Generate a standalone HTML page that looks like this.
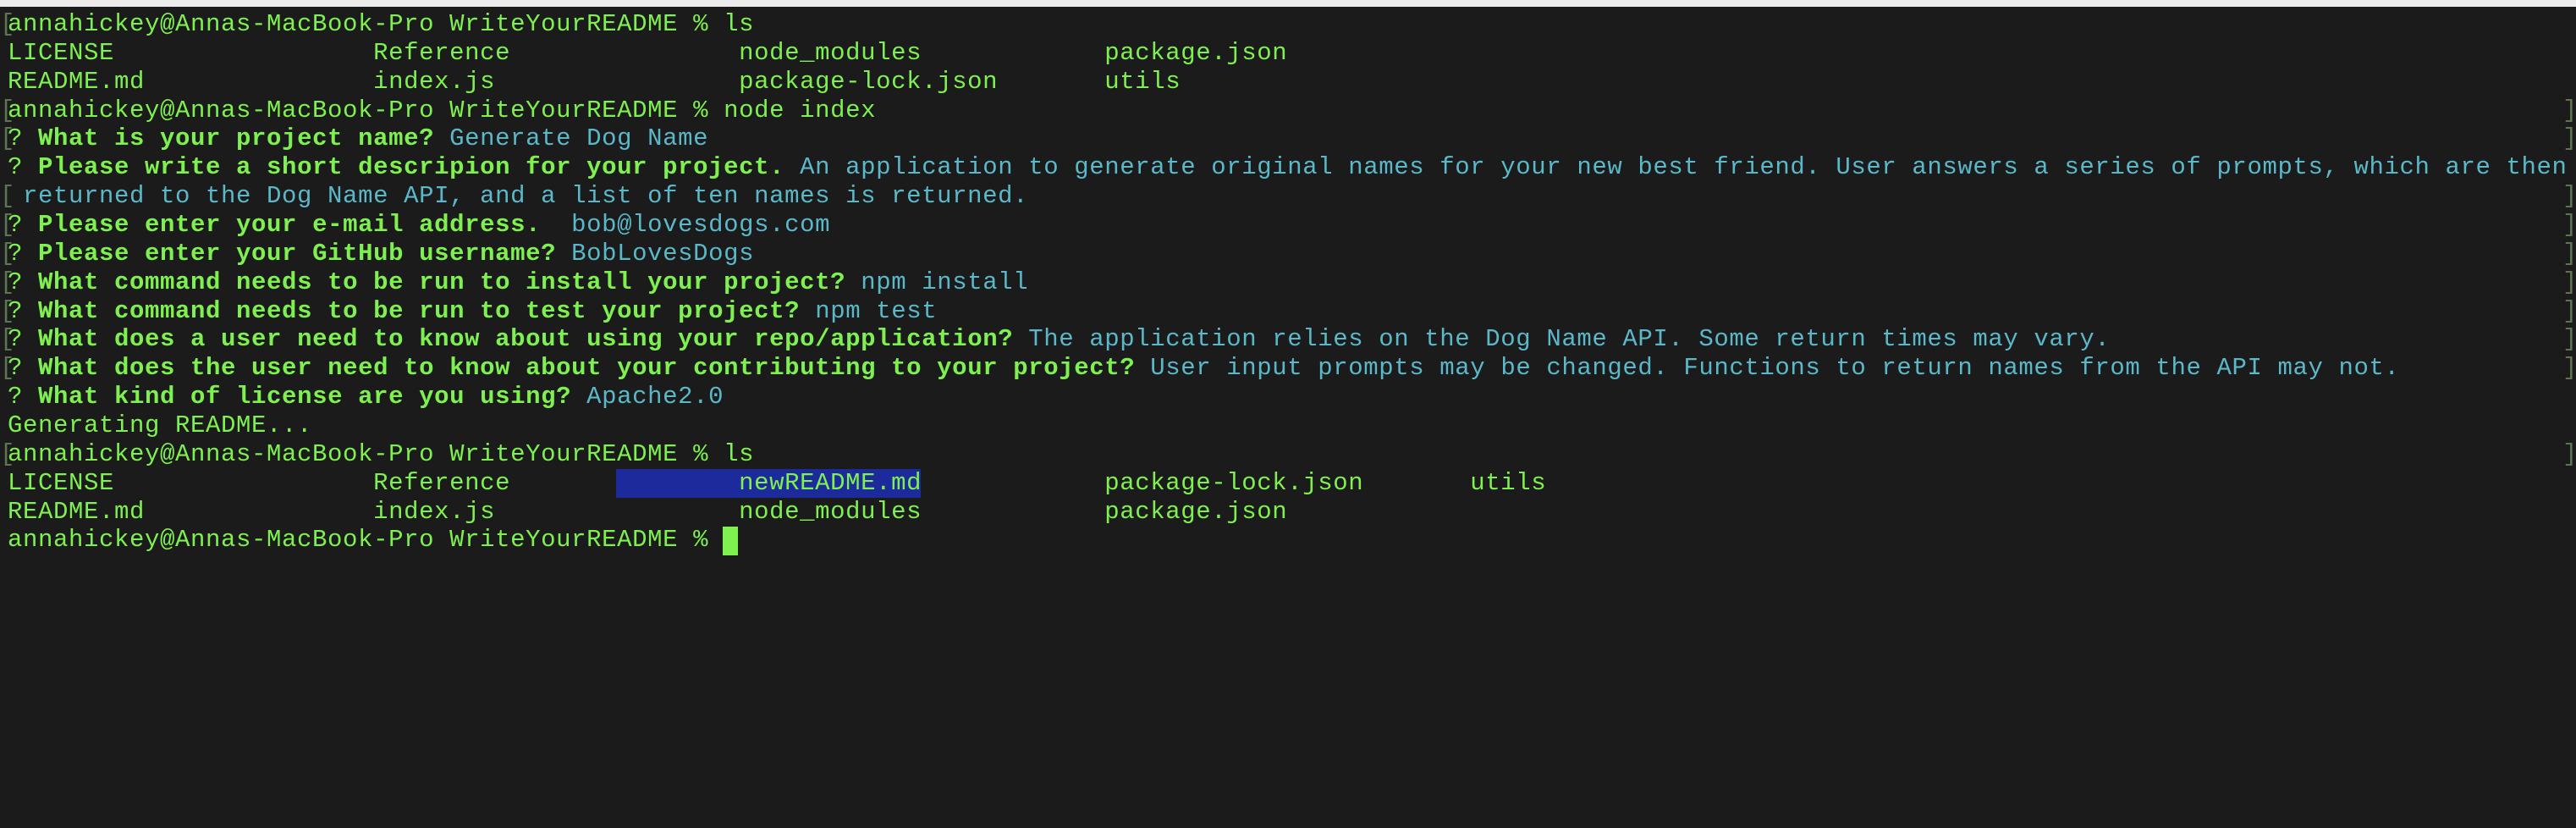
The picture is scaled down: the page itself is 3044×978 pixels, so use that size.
<!DOCTYPE html>
<html><head><meta charset="utf-8"><style>
html,body{margin:0;padding:0}
body{width:3044px;height:978px;background:#1b1b1b;overflow:hidden;position:relative;font-family:"Liberation Mono",monospace;font-size:29px;letter-spacing:0.6px;color:#7ef04f}
.top{position:absolute;left:0;top:0;width:3044px;height:8px;background:#ececec}
.t{position:absolute;left:9px;top:12px;width:3035px}
.l{height:33.86px;line-height:33.86px;white-space:pre;position:relative}
b{font-weight:bold}
.c{color:#5ab8c8}
.lb{position:absolute;left:-9px;top:0;color:#5d7552;font-weight:normal}
.rb{position:absolute;left:3019px;top:0;width:20px;color:#5d7552;white-space:nowrap}
.hl{position:absolute;left:728px;top:554px;width:360px;height:34px;background:#1c2a9c}
.cur{position:absolute;left:854px;top:622px;width:18px;height:34px;background:#7ef04f}
</style></head><body>
<div class="top"></div>
<div class="hl"></div>
<div class="cur"></div>
<div class="t">
<div class="l"><span class="lb">[</span>annahickey@Annas-MacBook-Pro WriteYourREADME % ls</div>
<div class="l">LICENSE                 Reference               node_modules            package.json</div>
<div class="l">README.md               index.js                package-lock.json       utils</div>
<div class="l"><span class="lb">[</span>annahickey@Annas-MacBook-Pro WriteYourREADME % node index<span class="rb">]</span></div>
<div class="l"><span class="lb">[</span>? <b>What is your project name?</b> <span class="c">Generate Dog Name</span><span class="rb">]</span></div>
<div class="l">? <b>Please write a short descripion for your project.</b> <span class="c">An application to generate original names for your new best friend. User answers a series of prompts, which are then</span></div>
<div class="l"><span class="lb">[</span><span class="c"> returned to the Dog Name API, and a list of ten names is returned.</span><span class="rb">]</span></div>
<div class="l"><span class="lb">[</span>? <b>Please enter your e-mail address.</b>  <span class="c">bob@lovesdogs.com</span><span class="rb">]</span></div>
<div class="l"><span class="lb">[</span>? <b>Please enter your GitHub username?</b> <span class="c">BobLovesDogs</span><span class="rb">]</span></div>
<div class="l"><span class="lb">[</span>? <b>What command needs to be run to install your project?</b> <span class="c">npm install</span><span class="rb">]</span></div>
<div class="l"><span class="lb">[</span>? <b>What command needs to be run to test your project?</b> <span class="c">npm test</span><span class="rb">]</span></div>
<div class="l"><span class="lb">[</span>? <b>What does a user need to know about using your repo/application?</b> <span class="c">The application relies on the Dog Name API. Some return times may vary.</span><span class="rb">]</span></div>
<div class="l"><span class="lb">[</span>? <b>What does the user need to know about your contributing to your project?</b> <span class="c">User input prompts may be changed. Functions to return names from the API may not.</span><span class="rb">]</span></div>
<div class="l">? <b>What kind of license are you using?</b> <span class="c">Apache2.0</span></div>
<div class="l">Generating README...</div>
<div class="l"><span class="lb">[</span>annahickey@Annas-MacBook-Pro WriteYourREADME % ls<span class="rb">]</span></div>
<div class="l">LICENSE                 Reference               newREADME.md            package-lock.json       utils</div>
<div class="l">README.md               index.js                node_modules            package.json</div>
<div class="l">annahickey@Annas-MacBook-Pro WriteYourREADME % </div>
</div>
</body></html>
